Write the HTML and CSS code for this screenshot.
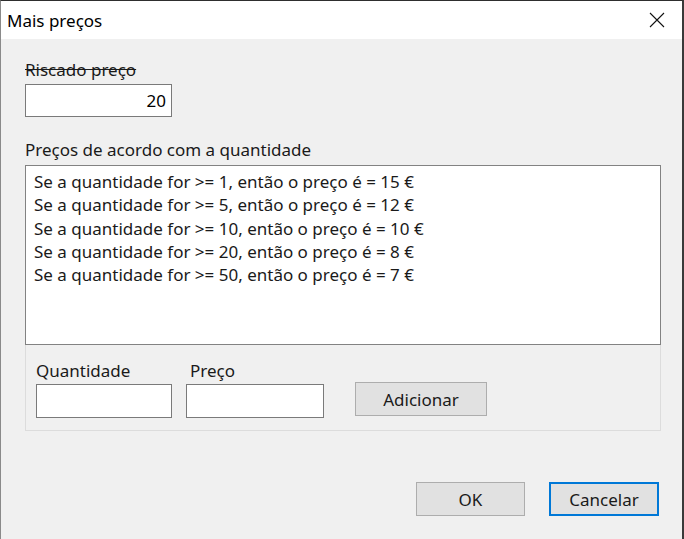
FILE: index.html
```html
<!DOCTYPE html>
<html lang="pt">
<head>
<meta charset="utf-8">
<title>Mais preços</title>
<link rel="stylesheet" href="styles.css">
</head>
<body>
<div class="window">
  <div class="titlebar">
    <span class="title">Mais preços</span>
    <span class="close">
      <svg width="16" height="16" viewBox="0 0 16 16"><path d="M1 1 L15 15 M15 1 L1 15" stroke="#111" stroke-width="1.1" fill="none"/></svg>
    </span>
  </div>
  <div class="content">
    <div class="label strike">Riscado preço</div>
    <div class="field field-price">20</div>
    <div class="label label-list">Preços de acordo com a quantidade</div>
    <div class="listbox">
      <div class="row">Se a quantidade for &gt;= 1, então o preço é = 15 €</div>
      <div class="row">Se a quantidade for &gt;= 5, então o preço é = 12 €</div>
      <div class="row">Se a quantidade for &gt;= 10, então o preço é = 10 €</div>
      <div class="row">Se a quantidade for &gt;= 20, então o preço é = 8 €</div>
      <div class="row">Se a quantidade for &gt;= 50, então o preço é = 7 €</div>
    </div>
    <div class="addpanel">
      <div class="col col-qty">
        <div class="label">Quantidade</div>
        <div class="field field-qty"></div>
      </div>
      <div class="col col-preco">
        <div class="label">Preço</div>
        <div class="field field-preco"></div>
      </div>
      <button class="btn btn-add">Adicionar</button>
    </div>
    <div class="footer">
      <button class="btn btn-ok">OK</button>
      <button class="btn btn-cancel">Cancelar</button>
    </div>
  </div>
</div>
</body>
</html>
```

FILE: styles.css
```css
* { box-sizing: border-box; }
html, body { margin: 0; padding: 0; }
body {
  width: 684px;
  height: 539px;
  overflow: hidden;
  font-family: "Noto Sans", "Open Sans", sans-serif;
  font-size: 17px;
  color: #000;
  background: #f0f0f0;
}
.window {
  width: 684px;
  height: 539px;
  border-top: 1px solid #2e2e2e;
  border-left: 1px solid #8a8a8a;
  border-right: 2px solid #3a3a3a;
  background: #f0f0f0;
  display: flex;
  flex-direction: column;
}
.titlebar {
  height: 38px;
  background: #fff;
  display: flex;
  align-items: center;
  justify-content: space-between;
  padding: 0 17px 0 6px;
  flex: none;
}
.title {
  font-size: 17px;
  color: #000;
}
.close {
  display: flex;
  width: 16px;
  height: 16px;
}
.content {
  flex: 1;
  padding: 21px 22px 0 24px;
  display: flex;
  flex-direction: column;
}
.label {
  line-height: 20px;
  height: 20px;
  white-space: nowrap;
  color: #1a1a1a;
}
.strike {
  text-decoration: line-through;
}
.field {
  background: #fff;
  border: 1px solid #7a7a7a;
  height: 33px;
}
.field-price {
  margin-top: 4px;
  width: 147px;
  text-align: right;
  padding-right: 5px;
  line-height: 31px;
}
.label-list {
  margin-top: 23px;
}
.listbox {
  margin-top: 5px;
  width: 636px;
  height: 180px;
  background: #fff;
  border: 1px solid #828282;
  padding: 4px 0 0 8px;
}
.row {
  height: 23.3px;
  line-height: 23px;
  white-space: nowrap;
  color: #1a1a1a;
}
.addpanel {
  width: 636px;
  height: 86px;
  border: 1px solid #dcdcdc;
  border-top: none;
  display: flex;
  align-items: flex-start;
  padding: 16px 0 0 10px;
}
.col { display: flex; flex-direction: column; }
.col .field { margin-top: 3px; height: 34px; }
.field-qty { width: 136px; }
.col-preco { margin-left: 14px; }
.col-preco .label { padding-left: 4px; }
.field-preco { width: 138px; }
.btn {
  font-family: inherit;
  font-size: 17px;
  color: #1a1a1a;
  background: #e1e1e1;
  border: 1px solid #adadad;
  padding: 0;
  height: 34px;
}
.btn-add {
  margin: 21px 0 0 31px;
  width: 132px;
}
.footer {
  display: flex;
  justify-content: flex-end;
  gap: 24px;
  margin-top: 51px;
  padding-right: 1px;
}
.btn-ok { width: 109px; }
.btn-cancel {
  width: 110px;
  border: 2px solid #0078d7;
}
```
